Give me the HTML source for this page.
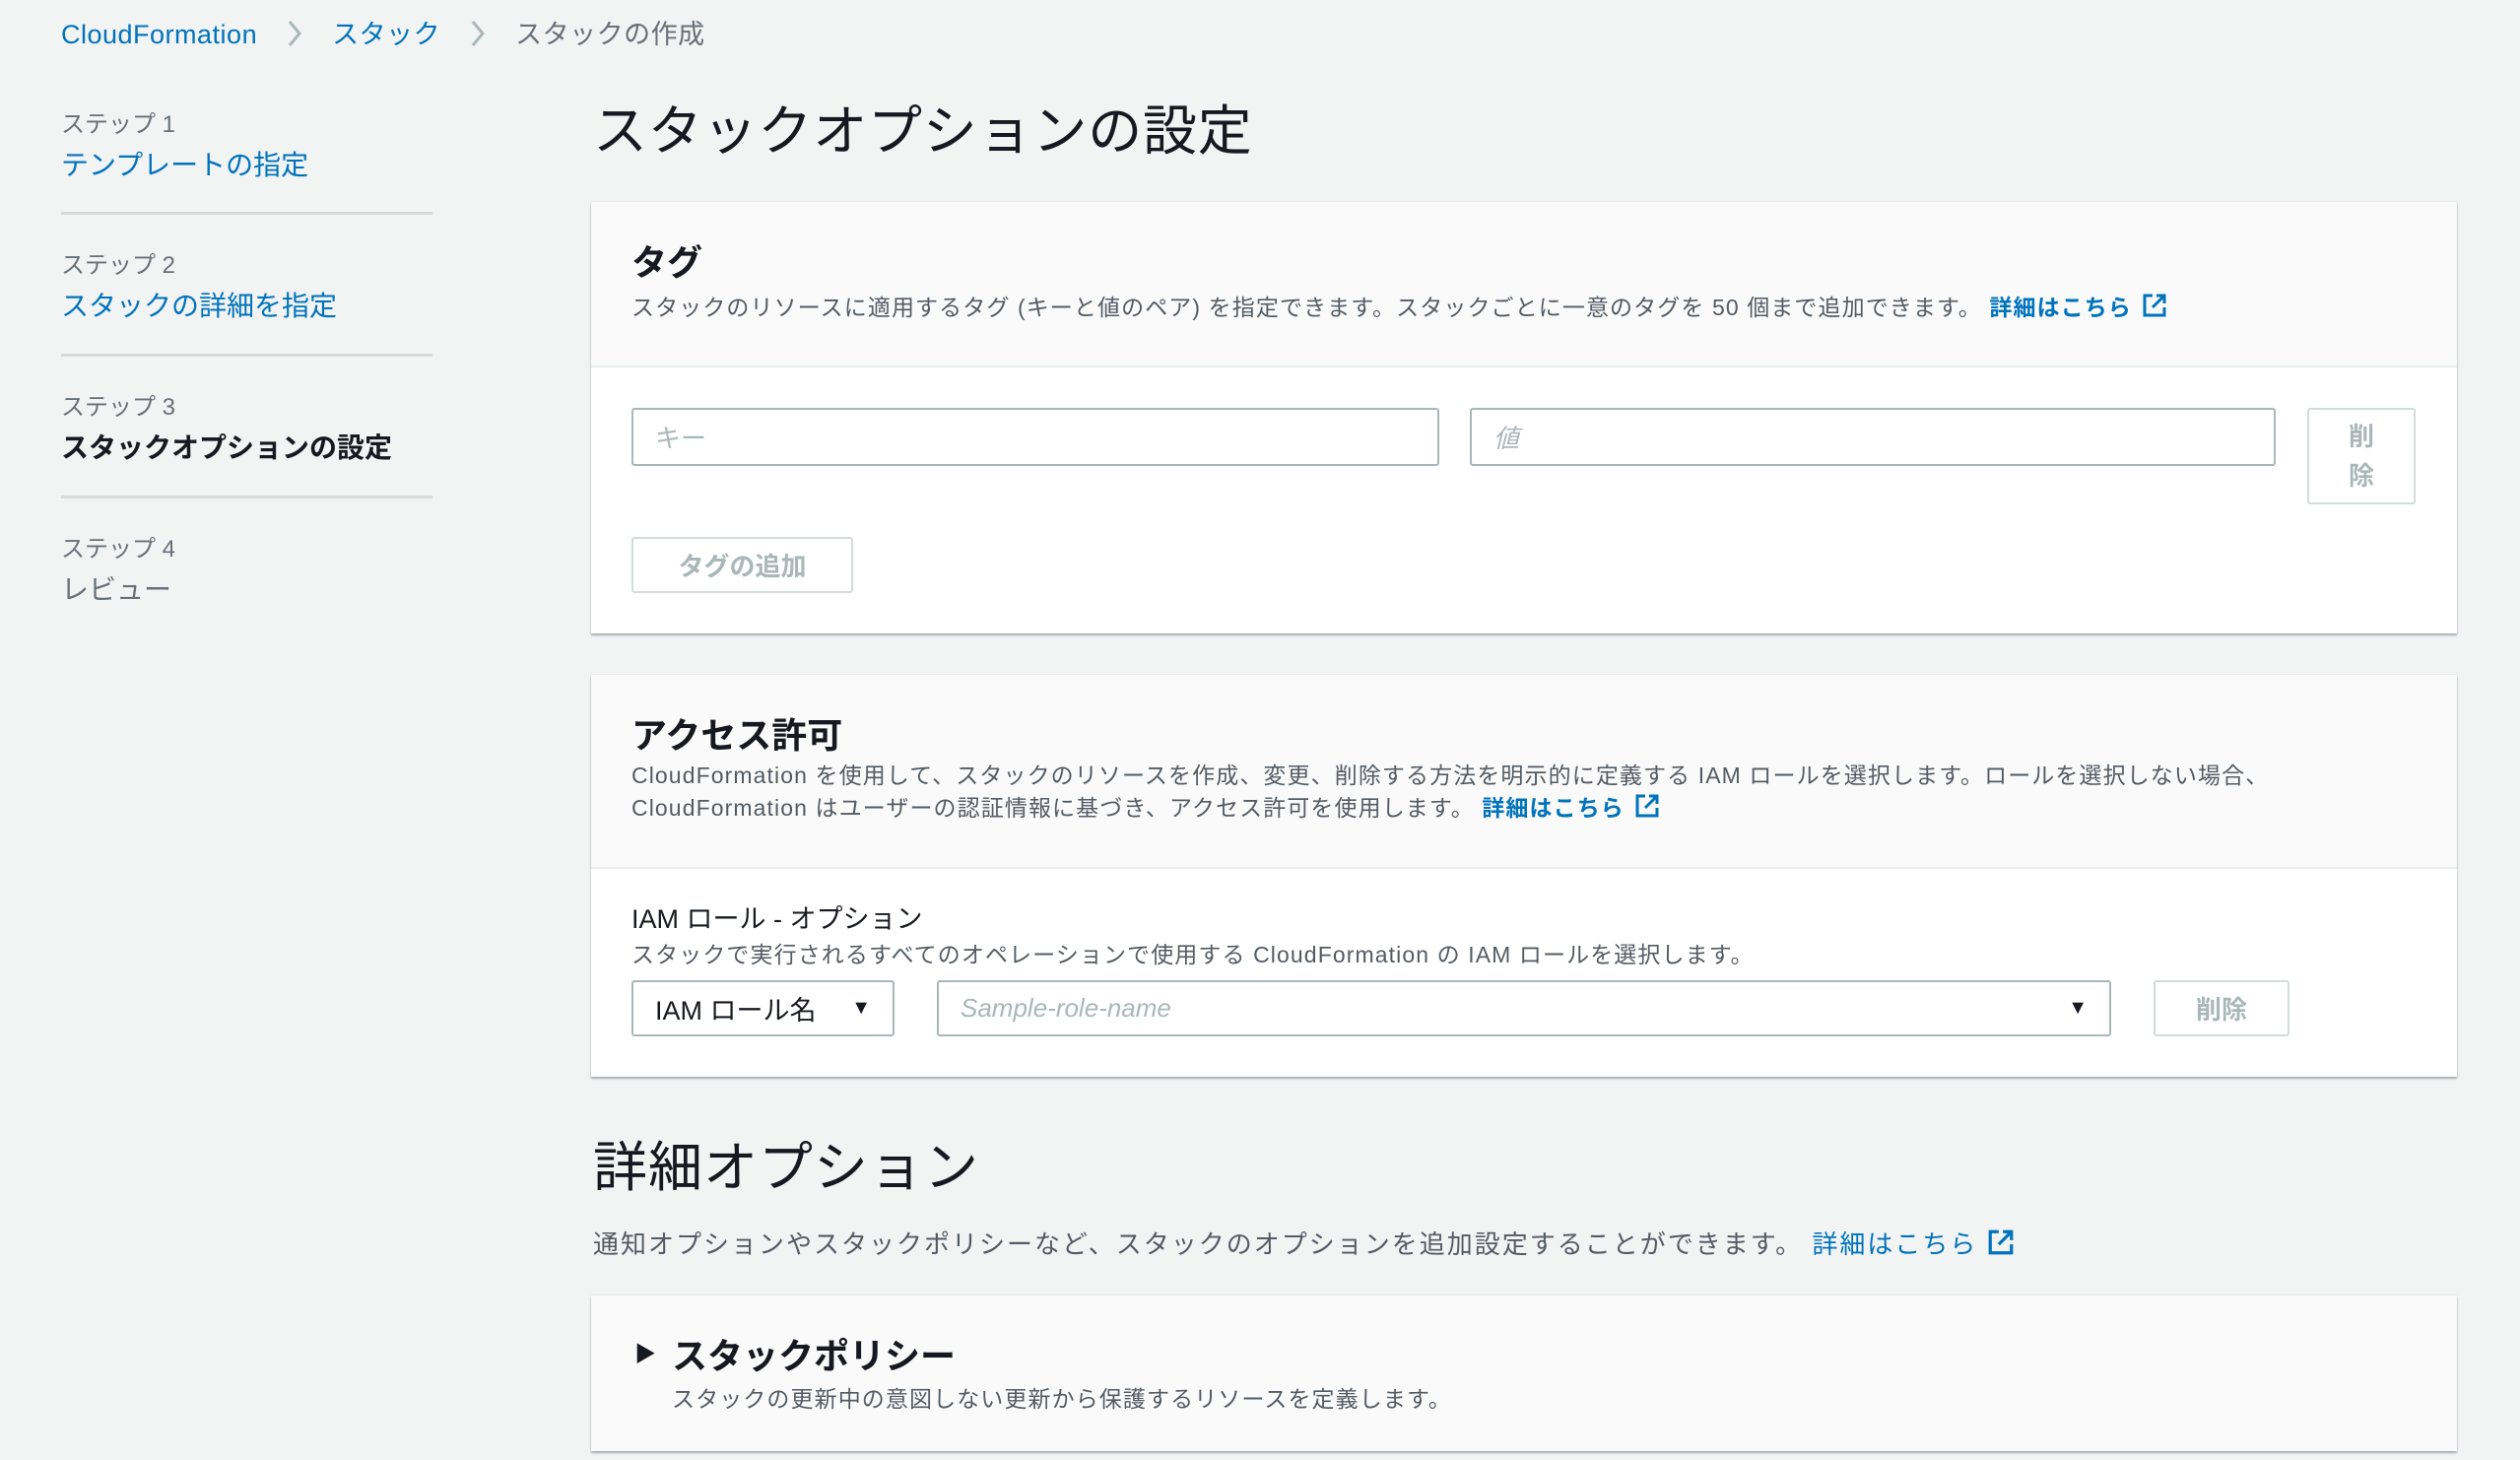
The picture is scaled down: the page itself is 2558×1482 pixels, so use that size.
<!DOCTYPE html>
<html><head><meta charset="utf-8"><style>
*{box-sizing:border-box;margin:0;padding:0}
body{width:2558px;height:1482px;background:#f2f3f3;font-family:"Liberation Sans","Noto Sans CJK JP",sans-serif;color:#16191f;position:relative;overflow:hidden}
.a{position:absolute;white-space:nowrap}
.blue{color:#0073bb}
.grey{color:#687078}
.panel{position:absolute;left:600px;width:1894px;background:#fff;box-shadow:0 2px 2px rgba(0,28,36,.3),0 0 1px rgba(0,28,36,.2)}
.hd{background:#fafafa;border-bottom:2px solid #eaeded;position:relative}
.inp{position:absolute;border:2px solid #aab7b8;border-radius:3px;background:#fff;font-size:26px;color:#aab7b8;font-style:italic;padding-left:22px;display:flex;align-items:center}
.btn{position:absolute;border:2px solid #d5dbdb;border-radius:3px;background:#fff;color:#aab7b8;font-weight:bold;font-size:26px;display:flex;align-items:center;justify-content:center;text-align:center}
.div{position:absolute;left:62px;width:377px;height:3px;background:#d5dbdb}
.ext{display:inline-block;vertical-align:-3px;margin-left:10px}
.d{letter-spacing:1.1px}
.sep{display:inline-block;margin:0 30px;vertical-align:-4px}
</style></head><body>
<div class="a" style="left:62px;top:13px;font-size:27px;letter-spacing:0.5px"><span class="blue">CloudFormation</span><svg class="sep" width="16" height="28" viewBox="0 0 16 28" fill="none" stroke="#aab7b8" stroke-width="3"><path d="M3 2l10 12-10 12"/></svg><span class="blue">スタック</span><svg class="sep" width="16" height="28" viewBox="0 0 16 28" fill="none" stroke="#aab7b8" stroke-width="3"><path d="M3 2l10 12-10 12"/></svg><span class="grey">スタックの作成</span></div>

<div class="a grey" style="left:62px;top:106px;font-size:24px">ステップ 1</div>
<div class="a blue" style="left:62px;top:146px;font-size:28px">テンプレートの指定</div>
<div class="div" style="top:215px"></div>
<div class="a grey" style="left:62px;top:249px;font-size:24px">ステップ 2</div>
<div class="a blue" style="left:62px;top:289px;font-size:28px">スタックの詳細を指定</div>
<div class="div" style="top:359px"></div>
<div class="a grey" style="left:62px;top:393px;font-size:24px">ステップ 3</div>
<div class="a" style="left:62px;top:433px;font-size:28px;font-weight:bold">スタックオプションの設定</div>
<div class="div" style="top:503px"></div>
<div class="a grey" style="left:62px;top:537px;font-size:24px">ステップ 4</div>
<div class="a grey" style="left:62px;top:577px;font-size:28px">レビュー</div>

<div class="a" style="left:602px;top:88px;font-size:55px;letter-spacing:0.8px">スタックオプションの設定</div>

<div class="panel" style="top:205px;height:438px">
 <div class="hd" style="height:168px">
  <div class="a" style="left:41px;top:33px;font-size:36px;font-weight:bold">タグ</div>
  <div class="a d" style="left:41px;top:88px;font-size:23px;color:#545b64">スタックのリソースに適用するタグ (キーと値のペア) を指定できます。スタックごとに一意のタグを 50 個まで追加できます。 <b class="blue">詳細はこちら</b><svg class="ext" width="26" height="26" viewBox="0 0 26 26" fill="none" stroke="#0073bb" stroke-width="3"><path d="M11 3H3v20h20v-8M15 3h8v8M23 3L11 15"/></svg></div>
 </div>
 <div class="inp" style="left:41px;top:209px;width:820px;height:59px;font-style:normal">キー</div>
 <div class="inp" style="left:892px;top:209px;width:818px;height:59px">値</div>
 <div class="btn" style="left:1742px;top:209px;width:110px;height:98px;line-height:40px">削<br>除</div>
 <div class="btn" style="left:41px;top:340px;width:225px;height:57px">タグの追加</div>
</div>

<div class="panel" style="top:685px;height:408px">
 <div class="hd" style="height:197px">
  <div class="a" style="left:41px;top:33px;font-size:36px;font-weight:bold">アクセス許可</div>
  <div class="a d" style="left:41px;top:86px;font-size:23px;color:#545b64;line-height:33px">CloudFormation を使用して、スタックのリソースを作成、変更、削除する方法を明示的に定義する IAM ロールを選択します。ロールを選択しない場合、<br>CloudFormation はユーザーの認証情報に基づき、アクセス許可を使用します。 <b class="blue">詳細はこちら</b><svg class="ext" width="26" height="26" viewBox="0 0 26 26" fill="none" stroke="#0073bb" stroke-width="3"><path d="M11 3H3v20h20v-8M15 3h8v8M23 3L11 15"/></svg></div>
 </div>
 <div class="a" style="left:41px;top:226px;font-size:27px">IAM ロール - オプション</div>
 <div class="a d" style="left:41px;top:265px;font-size:23px;color:#545b64">スタックで実行されるすべてのオペレーションで使用する CloudFormation の IAM ロールを選択します。</div>
 <div class="inp" style="left:41px;top:310px;width:267px;height:57px;color:#16191f;font-style:normal;font-size:27px">IAM ロール名<span style="position:absolute;right:22px;font-size:20px">▼</span></div>
 <div class="inp" style="left:351px;top:310px;width:1192px;height:57px">Sample-role-name<span style="position:absolute;right:22px;font-size:20px;color:#16191f;font-style:normal">▼</span></div>
 <div class="btn" style="left:1586px;top:310px;width:138px;height:57px">削除</div>
</div>

<div class="a" style="left:602px;top:1140px;font-size:55px;letter-spacing:1px">詳細オプション</div>
<div class="a" style="left:602px;top:1243px;font-size:26px;color:#545b64;letter-spacing:2px">通知オプションやスタックポリシーなど、スタックのオプションを追加設定することができます。 <span class="blue">詳細はこちら</span><svg class="ext" width="28" height="28" viewBox="0 0 26 26" fill="none" stroke="#0073bb" stroke-width="3"><path d="M11 3H3v20h20v-8M15 3h8v8M23 3L11 15"/></svg></div>

<div class="panel" style="top:1315px;height:158px;background:#fafafa">
 <div class="a" style="left:44px;top:42px;font-size:22px">▶</div>
 <div class="a" style="left:82px;top:33px;font-size:36px;font-weight:bold">スタックポリシー</div>
 <div class="a d" style="left:82px;top:86px;font-size:23px;color:#545b64">スタックの更新中の意図しない更新から保護するリソースを定義します。</div>
</div>
</body></html>
